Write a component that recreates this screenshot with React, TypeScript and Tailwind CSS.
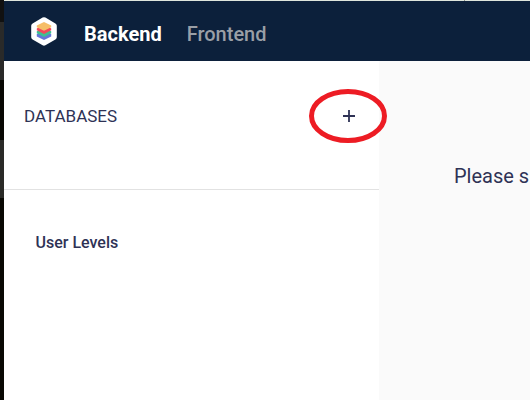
function Logo() {
  return (
    <svg viewBox="0 0 26 29" className="h-[29px] w-[26px]" aria-label="Logo">
      <path d="M11.6.6q1.4-.8 2.8 0l10 5.8q1.4.8 1.4 2.3v11.5q0 1.5-1.4 2.3l-10 5.8q-1.4.8-2.8 0l-10-5.8Q.2 21.7 .2 20.2V8.7Q.2 7.2 1.6 6.4z" fill="#fff" />
      <path d="M5.8 17l1.700-.8h11l1.700.8v2.500L13 23l-7.200-3.500z" fill="#6475d8" />
      <path d="M5.8 14.200l1.700-.8h11l1.700.8v2L13 20l-7.200-3.800z" fill="#3fbf92" />
      <path d="M5.8 11.400l1.700-.8h11l1.700.8v1.800L13 17l-7.200-3.800z" fill="#f2475b" />
      <path d="M13 5l7.200 3.600v1.600L13 13.800l-7.200-3.600V8.600z" fill="#f6be68" />
    </svg>
  );
}

export default function App() {
  return (
    <div className="flex h-[400px] w-[530px] overflow-hidden bg-white font-[Roboto,'Liberation_Sans',sans-serif] text-[#2e3255]">
      <div className="flex w-1 shrink-0 flex-col">
        <div className="h-[22px] bg-[#111111]" />
        <div className="h-[58px] bg-[#2a2a29]" />
        <div className="h-[60px] bg-[#080703]" />
        <div className="h-[58px] bg-[#2a2a27]" />
        <div className="flex-1 bg-[#090803]" />
      </div>
      <div className="flex min-w-0 flex-1 flex-col">
        <div className="flex h-px shrink-0 bg-[#dfe6dc] pl-[460px]">
          <div className="w-px bg-[#8c918b]" />
        </div>
        <header className="flex h-[60px] shrink-0 items-center bg-[#0c203b] pl-[27px]">
          <Logo />
          <nav className="ml-[27px] flex gap-[25px] pt-[6px] text-xl leading-6">
            <span className="font-bold text-white">Backend</span>
            <span className="font-medium text-[#9a9fa6]">Frontend</span>
          </nav>
        </header>
        <div className="flex min-h-0 flex-1">
          <aside className="w-[375px] shrink-0 bg-white">
            <section className="flex h-[129px] items-start border-b border-[#e2e2e2] pt-[43px] pl-5">
              <h2 className="w-[286px] shrink-0 text-[17px] leading-[25px]">DATABASES</h2>
              <button className="relative flex h-6 w-[78px] shrink-0 items-center justify-center" aria-label="Add database">
                <svg viewBox="0 0 12 12" className="h-3 w-3">
                  <path d="M0 6h12M6 0v12" fill="none" stroke="#2e3255" strokeWidth="1.8" />
                </svg>
                <svg viewBox="0 0 80 56" className="absolute top-[-16px] left-[-2px] h-14 w-20 max-w-none">
                  <ellipse cx="40" cy="28" rx="36.5" ry="24.5" fill="none" stroke="#ed1c24" strokeWidth="5" />
                </svg>
              </button>
            </section>
            <div className="pt-[41px] pl-[31.5px] text-base leading-6 font-medium">User Levels</div>
          </aside>
          <main className="min-w-0 flex-1 bg-[#fafafa] pt-[103px] pl-[75px] text-xl leading-6 whitespace-nowrap">
            Please s
          </main>
        </div>
      </div>
    </div>
  );
}
